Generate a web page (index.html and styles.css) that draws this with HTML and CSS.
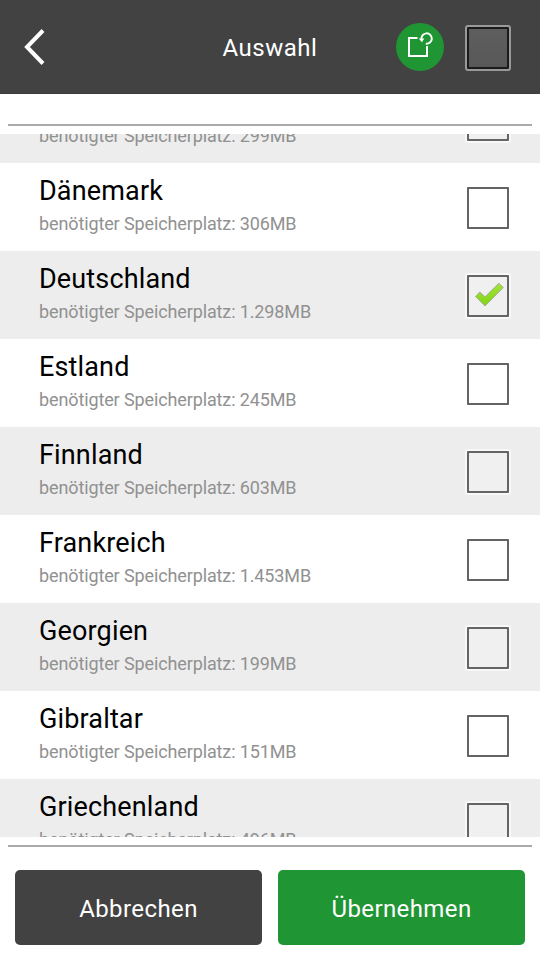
FILE: index.html
```html
<!DOCTYPE html>
<html lang="de">
<head>
<meta charset="utf-8">
<title>Auswahl</title>
<link rel="stylesheet" href="styles.css">
</head>
<body>
<header class="header">
  <svg class="back" width="24" height="40" viewBox="0 0 24 40" fill="none" stroke="#fff" stroke-width="4"><path d="M21 3.500 5 20l16 16.500"/></svg>
  <h1 class="title">Auswahl</h1>
  <svg class="refresh" width="48" height="48" viewBox="0 0 48 48" fill="none" stroke="#fff" stroke-width="2">
    <circle cx="24" cy="24" r="24" fill="#209533" stroke="none"/>
    <path d="M21.500 15H13v18h18V23"/>
    <path d="M25.500 16.500a5.200 5.200 0 1 1 4.300 4.200"/>
    <path d="M22.800 15.500h5.500l-2.400 3.700z" fill="#fff" stroke="none"/>
  </svg>
  <span class="check-all"></span>
</header>
<div class="rule"></div>
<main class="list">
  <div class="row"><div class="text"><div class="name"></div><div class="size">benötigter Speicherplatz: 299MB</div></div><span class="box"></span></div>
  <div class="row"><div class="text"><div class="name">Dänemark</div><div class="size">benötigter Speicherplatz: 306MB</div></div><span class="box"></span></div>
  <div class="row"><div class="text"><div class="name">Deutschland</div><div class="size">benötigter Speicherplatz: 1.298MB</div></div><span class="box"><svg class="tick" width="38" height="38" viewBox="0 0 38 38"><defs><linearGradient id="g" x1="0" y1="0" x2="0" y2="1"><stop offset="0" stop-color="#a4e43c"/><stop offset="1" stop-color="#7fd510"/></linearGradient></defs><path d="M6.500 19.500 10.800 15l5.200 4.800L29.800 6.300 34.300 10.500 16 29z" fill="url(#g)" stroke="#a9aca3" stroke-width="1" stroke-linejoin="round"/></svg></span></div>
  <div class="row"><div class="text"><div class="name">Estland</div><div class="size">benötigter Speicherplatz: 245MB</div></div><span class="box"></span></div>
  <div class="row"><div class="text"><div class="name">Finnland</div><div class="size">benötigter Speicherplatz: 603MB</div></div><span class="box"></span></div>
  <div class="row"><div class="text"><div class="name">Frankreich</div><div class="size">benötigter Speicherplatz: 1.453MB</div></div><span class="box"></span></div>
  <div class="row"><div class="text"><div class="name">Georgien</div><div class="size">benötigter Speicherplatz: 199MB</div></div><span class="box"></span></div>
  <div class="row"><div class="text"><div class="name">Gibraltar</div><div class="size">benötigter Speicherplatz: 151MB</div></div><span class="box"></span></div>
  <div class="row"><div class="text"><div class="name">Griechenland</div><div class="size">benötigter Speicherplatz: 496MB</div></div><span class="box"></span></div>
</main>
<footer class="footer">
  <button class="btn">Abbrechen</button>
  <button class="btn primary">Übernehmen</button>
</footer>
</body>
</html>
```
FILE: styles.css
```css
* { box-sizing: border-box; }
body {
  margin: 0;
  width: 540px;
  height: 960px;
  overflow: hidden;
  background: #fff;
  font-family: Roboto, sans-serif;
  display: flex;
  flex-direction: column;
}
.header {
  height: 94px;
  flex: none;
  background: #424242;
  display: grid;
  grid-template-columns: 144px 252px 69px 46px;
  align-items: center;
  border-bottom: 1px solid #3d3d3d;
}
.back { margin-left: 22px; }
.title {
  margin: 2px 0 0;
  text-align: center;
  color: #fff;
  font-size: 24px;
  font-weight: 400;
  letter-spacing: .5px;
  line-height: 30px;
}
.check-all {
  width: 46px;
  height: 46px;
  margin-top: 3px;
  border: 2px solid #999;
  border-radius: 3px;
  background: linear-gradient(#5e5e5e, #585858);
  box-shadow: inset 0 0 0 2px #1b1b1b;
}
.rule {
  flex: none;
  height: 2px;
  margin: 30px 8px 8px;
  background: #aaa;
}
.list {
  height: 703px;
  flex: none;
  overflow: hidden;
  display: flex;
  flex-direction: column;
  justify-content: flex-start;
}
.row {
  flex: none;
  height: 88px;
  padding: 0 31px 0 39px;
  display: flex;
  justify-content: space-between;
  background: #fff;
}
.row:nth-child(odd) { background: #ededed; }
.row:first-child { margin-top: -59px; }
.name {
  height: 32px;
  margin-top: 12px;
  font-size: 27px;
  line-height: 32px;
  letter-spacing: .15px;
  color: #000;
}
.size {
  margin-top: 5px;
  font-size: 18px;
  line-height: 24px;
  letter-spacing: -.12px;
  color: #919191;
}
.box {
  width: 42px;
  height: 42px;
  margin-top: 24px;
  border: 2px solid #646464;
  border-radius: 1px;
  background: rgba(255, 255, 255, .2);
  box-shadow: 0 0 0 2px rgba(255, 255, 255, .6);
}
.tick { display: block; }
.footer {
  flex: 1;
  margin: 8px 8px 0;
  border-top: 2px solid #aaa;
  padding: 23px 7px 0;
  display: flex;
  gap: 16px;
}
.btn {
  flex: 1;
  height: 75px;
  padding: 2px 0 0;
  border: 0;
  border-radius: 5px;
  background: #424242;
  color: #fff;
  font: 24px Roboto, sans-serif;
  letter-spacing: .4px;
}
.primary { background: #209533; }
```
